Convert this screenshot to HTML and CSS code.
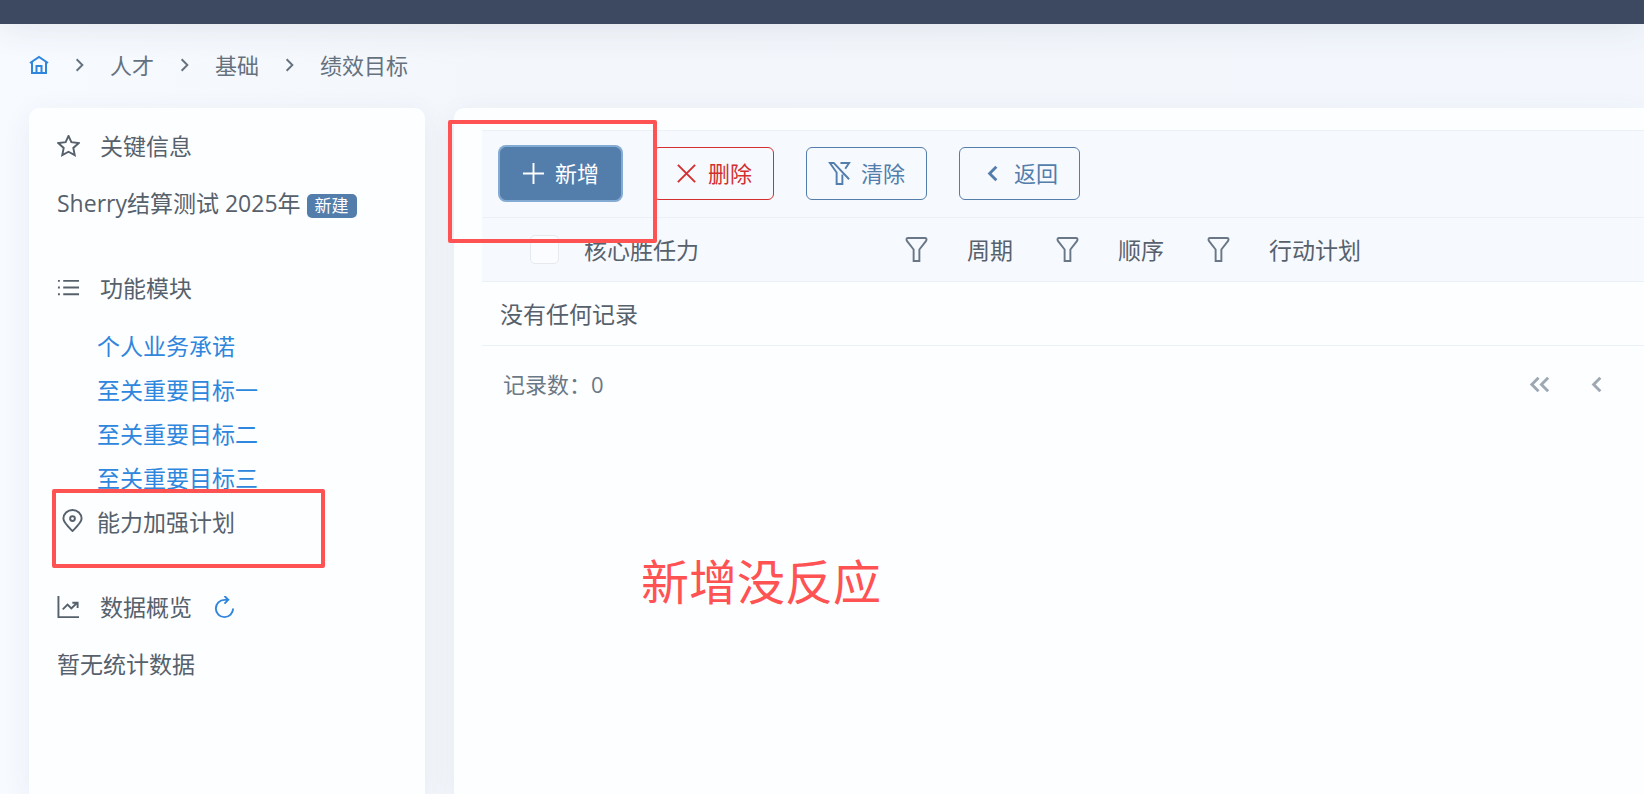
FILE: index.html
```
<!DOCTYPE html>
<html lang="zh-CN">
<head>
  <meta charset="UTF-8" />
  <meta name="viewport" content="width=device-width, initial-scale=1.0"/>
  <title>绩效目标</title>
  <link rel="stylesheet" href="styles.css">
</head>
<body>
  <!-- Shared icons -->
  <svg class="sprite" aria-hidden="true">
    <symbol id="chevron-right" viewBox="0 0 24 24"><path d="M9 6l6 6-6 6"/></symbol>
    <symbol id="chevron-left" viewBox="0 0 24 24"><path d="M16 5l-7 7 7 7"/></symbol>
    <symbol id="filter" viewBox="0 0 24 28"><path d="M3 2h18c1 0 2 1 1 3l-7 9v12H9V14L2 5C1 3 2 2 3 2z"/></symbol>
  </svg>

  <header class="topbar"></header>

  <nav class="breadcrumb">
    <a href="#" class="home" aria-label="首页">
      <svg class="icon-home" viewBox="0 0 20 20"><path d="M1 8l9-6 9 6M3 7v11h14V7M7.500 18v-7h5v7"/></svg>
    </a>
    <svg class="sep"><use href="#chevron-right"/></svg>
    <span>人才</span>
    <svg class="sep"><use href="#chevron-right"/></svg>
    <span>基础</span>
    <svg class="sep"><use href="#chevron-right"/></svg>
    <span>绩效目标</span>
  </nav>

  <div class="layout">
    <aside class="card sidebar">
      <section>
        <h2>
          <svg class="icon" viewBox="0 0 24 24"><path d="M12 1l3 6.500 7.500 1-5.500 5 1.500 7.500L12 17.500l-6.500 3.500L7 13.500 1.500 8.500 9 7.500z"/></svg>
          关键信息
        </h2>
        <p>Sherry结算测试 2025年 <span class="tag">新建</span></p>
      </section>

      <section>
        <h2>
          <svg class="icon" viewBox="0 0 24 24"><path d="M6.500 4H23M6.500 11H23M6.500 18H23M1 4h2M1 11h2M1 18h2"/></svg>
          功能模块
        </h2>
        <ul class="modules">
          <li><a href="#">个人业务承诺</a></li>
          <li><a href="#">至关重要目标一</a></li>
          <li><a href="#">至关重要目标二</a></li>
          <li><a href="#">至关重要目标三</a></li>
          <li class="current">
            <svg class="icon pin" viewBox="0 0 24 24"><path d="M12 23C7 18 2.500 14 2.500 10a9.500 9 0 0 1 19 0c0 4-4.500 8-9.500 13z"/><circle cx="12" cy="10" r="2.500"/></svg>
            能力加强计划
            <span class="mark mark-module"></span>
          </li>
        </ul>
      </section>

      <section>
        <h2>
          <svg class="icon" viewBox="0 0 24 24"><path d="M1.500 0v22H23M6 14l5-5 4 4 6-6M16 7h5.500v5.500"/></svg>
          数据概览
          <button class="refresh" type="button" aria-label="刷新">
            <svg class="icon" viewBox="0 0 24 24"><path d="M16 4h-3a9 9 0 1 0 9 9M13 0l4 4-4 4"/></svg>
          </button>
        </h2>
        <p>暂无统计数据</p>
      </section>
    </aside>

    <main class="card content">
      <div class="toolbar">
        <button class="btn btn-primary" type="button">
          <svg class="icon" viewBox="0 0 24 24"><path d="M12 1v22M1 12h22"/></svg>新增
        </button>
        <button class="btn btn-danger" type="button">
          <svg class="icon" viewBox="0 0 24 24"><path d="M3 3l18 18M21 3L3 21"/></svg>删除
        </button>
        <button class="btn" type="button">
          <svg class="icon" viewBox="0 0 24 24"><path d="M2 1h4l16 17M6 1H2l7 10v12h6V13M13 1h9l-4 6"/></svg>清除
        </button>
        <button class="btn" type="button">
          <svg class="icon chevron"><use href="#chevron-left"/></svg>返回
        </button>
        <span class="mark mark-add"></span>
      </div>

      <table>
        <colgroup>
          <col class="col-check">
          <col class="col-name">
          <col class="col-small">
          <col class="col-small">
          <col>
        </colgroup>
        <thead>
          <tr>
            <th class="check"><input type="checkbox" aria-label="全选"></th>
            <th><div class="th"><span>核心胜任力</span><svg class="filter"><use href="#filter"/></svg></div></th>
            <th><div class="th"><span>周期</span><svg class="filter"><use href="#filter"/></svg></div></th>
            <th><div class="th"><span>顺序</span><svg class="filter"><use href="#filter"/></svg></div></th>
            <th><div class="th"><span>行动计划</span></div></th>
          </tr>
        </thead>
        <tbody>
          <tr><td colspan="5">没有任何记录</td></tr>
        </tbody>
      </table>

      <div class="paginator">
        <span>记录数：0</span>
        <div class="pages">
          <button type="button" aria-label="第一页"><svg class="icon" viewBox="0 0 24 24"><path d="M11 5l-7 7 7 7M21 5l-7 7 7 7"/></svg></button>
          <button type="button" aria-label="上一页"><svg class="icon"><use href="#chevron-left"/></svg></button>
        </div>
      </div>

      <p class="note">新增没反应</p>
    </main>
  </div>
</body>
</html>
```
FILE: styles.css
```
* {
  box-sizing: border-box;
}

body {
  margin: 0;
  min-height: 100vh;
  display: flex;
  flex-direction: column;
  overflow: hidden;
  font-family: 'Open Sans', 'Noto Sans CJK SC', sans-serif;
  font-size: 23px;
  line-height: 44px;
  color: #56616c;
  background: linear-gradient(90deg, #f7faff, #f3f6fb 30%, #f3f7fd);
}

svg {
  fill: none;
  stroke: currentColor;
  stroke-width: 2;
  flex-shrink: 0;
}

.sprite {
  position: absolute;
  width: 0;
  height: 0;
}

.icon {
  width: 23px;
  height: 23px;
}

h2,
p,
ul {
  margin: 0;
  padding: 0;
  font-weight: normal;
}

a {
  color: #2f86dd;
  text-decoration: none;
}

button {
  font: inherit;
  color: inherit;
  background: none;
  border: none;
  padding: 0;
  cursor: pointer;
}

.topbar {
  height: 24px;
  background-color: #3d4861;
  box-shadow: 0 0 36px rgba(60, 70, 85, 0.14);
}

.breadcrumb {
  display: flex;
  align-items: center;
  height: 84px;
  padding: 0 29px 2px;
  font-size: 22px;
  color: #65727e;
}

.home {
  display: flex;
}

.icon-home {
  width: 20px;
  height: 20px;
}

.sep {
  width: 23px;
  height: 24px;
  margin: 0 19px;
}

.layout {
  flex: 1;
  display: flex;
  gap: 29px;
  padding-left: 29px;
}

.card {
  background-color: #fdfeff;
  border-radius: 10px 10px 0 0;
  box-shadow: 0 8px 30px rgba(60, 75, 95, 0.07);
}

/* Sidebar */
.sidebar {
  width: 396px;
  flex-shrink: 0;
  padding: 16px 28px;
}

.sidebar section {
  margin-bottom: 41px;
}

.sidebar h2 {
  display: flex;
  align-items: center;
  gap: 20px;
  font-size: 23px;
  margin-bottom: 13px;
}

.tag {
  display: inline-block;
  padding: 0 8px;
  border-radius: 5px;
  font-size: 17px;
  line-height: 24px;
  color: white;
  background-color: #537dab;
}

.refresh {
  display: flex;
  color: #2f86dd;
}

.modules {
  list-style: none;
  padding: 1px 0 0 40px;
}

.current {
  position: relative;
}

.pin {
  position: absolute;
  left: -36px;
  top: 9px;
}

/* Content */
.content {
  flex: 1;
  min-width: 0;
  padding: 22px 0 0 28px;
  border-top-right-radius: 0;
}

.toolbar {
  position: relative;
  display: flex;
  align-items: center;
  gap: 32px;
  height: 88px;
  padding: 0 18px 2px;
  font-size: 22px;
  background-color: #f6f9fe;
  border-top: 1px solid #ebf1f7;
  border-bottom: 1px solid #ebf1f7;
}

.btn {
  display: flex;
  align-items: center;
  justify-content: center;
  gap: 10px;
  min-width: 121px;
  height: 53px;
  border: 1px solid #537dab;
  border-radius: 6px;
  color: #537dab;
}

.btn-primary {
  color: white;
  background-color: #537dab;
  box-shadow: 0 0 0 2px #84abd3;
}

.btn-danger {
  color: #d32f2f;
  border-color: #d32f2f;
}

.chevron {
  stroke-width: 3;
}

table {
  width: 100%;
  table-layout: fixed;
  border-spacing: 0;
}

.col-check {
  width: 86px;
}

.col-name {
  width: 383px;
}

.col-small {
  width: 151px;
}

th,
td {
  height: 64px;
  padding: 0 18px;
  text-align: left;
  font-weight: normal;
  border-bottom: 1px solid #ebf1f7;
}

th {
  padding: 0 23px 0 16px;
  background-color: #f6f9fe;
}

.th {
  display: flex;
  align-items: center;
  justify-content: space-between;
}

.filter {
  width: 23px;
  height: 27px;
  color: #697786;
}

th.check {
  padding: 0 0 0 48px;
}

input[type="checkbox"] {
  appearance: none;
  display: block;
  width: 29px;
  height: 29px;
  margin: 0;
  border: 1px solid #e6e9ee;
  border-radius: 5px;
  background-color: #fafcff;
}

.paginator {
  display: flex;
  align-items: center;
  justify-content: space-between;
  height: 76px;
  padding: 0 19px 0 21px;
  font-size: 22px;
  color: #6b7885;
}

.pages {
  display: flex;
}

.pages button {
  display: flex;
  align-items: center;
  justify-content: center;
  width: 57px;
  height: 57px;
  color: #9da8b3;
}

.pages svg {
  stroke-width: 3;
}

/* Review marks */
.mark {
  position: absolute;
  border: 4px solid #ff5252;
  border-radius: 2px;
}

.mark-add {
  left: -34px;
  top: -11px;
  width: 209px;
  height: 123px;
}

.mark-module {
  left: -45px;
  top: -11px;
  width: 273px;
  height: 79px;
}

.note {
  padding: 124px 0 0 159px;
  font-size: 48px;
  line-height: 72px;
  color: #ff5252;
}
```
